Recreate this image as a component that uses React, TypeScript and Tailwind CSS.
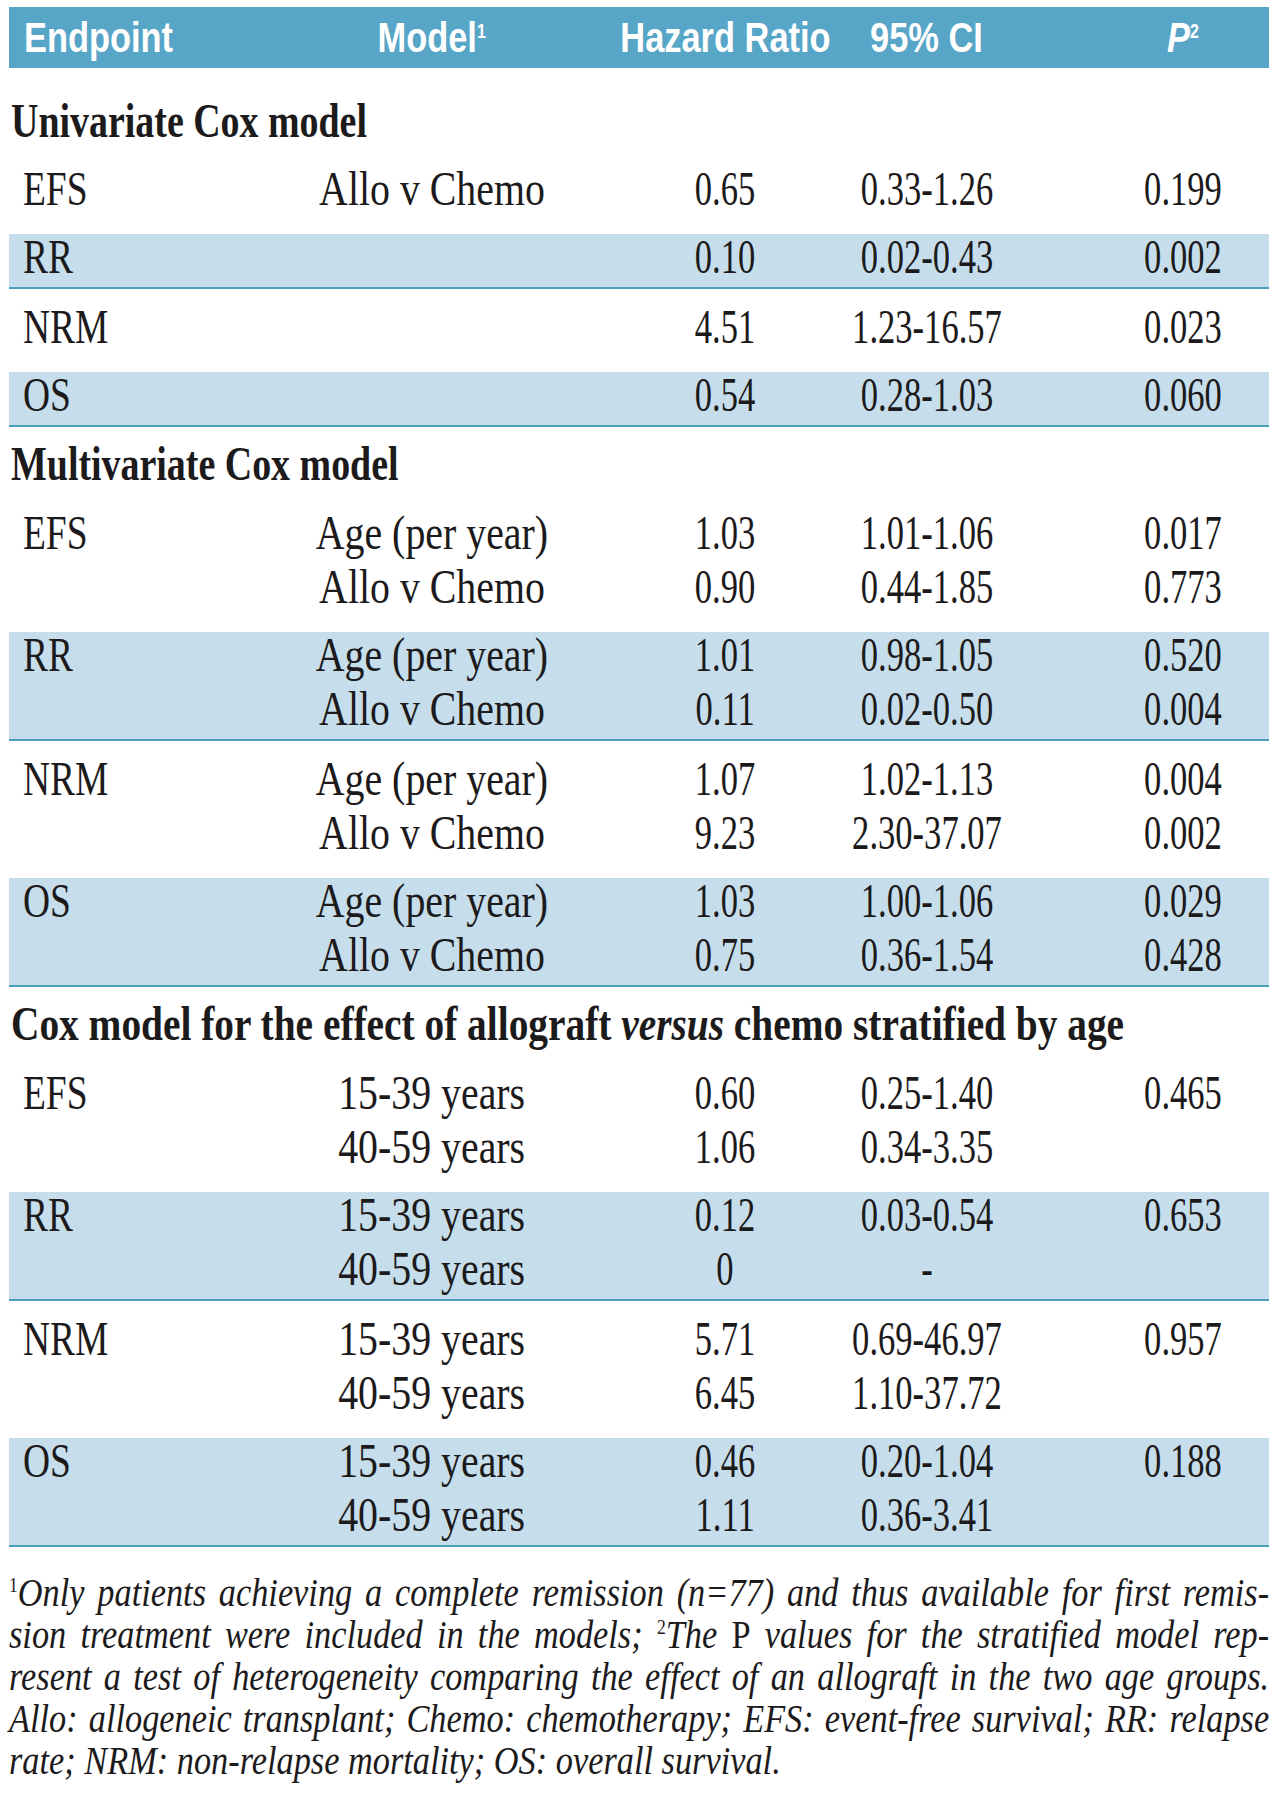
import React from 'react';

type Line = [string, string, string, string];
type Row = { ep: string; lines: Line[] };

const cols = 'grid grid-cols-[162px_522px_64px_340px_172px] items-center';

const univariate: Row[] = [
    { ep: 'EFS', lines: [['Allo v Chemo', '0.65', '0.33-1.26', '0.199']] },
    { ep: 'RR', lines: [['', '0.10', '0.02-0.43', '0.002']] },
    { ep: 'NRM', lines: [['', '4.51', '1.23-16.57', '0.023']] },
    { ep: 'OS', lines: [['', '0.54', '0.28-1.03', '0.060']] },
];

const multivariate: Row[] = [
    { ep: 'EFS', lines: [['Age (per year)', '1.03', '1.01-1.06', '0.017'], ['Allo v Chemo', '0.90', '0.44-1.85', '0.773']] },
    { ep: 'RR', lines: [['Age (per year)', '1.01', '0.98-1.05', '0.520'], ['Allo v Chemo', '0.11', '0.02-0.50', '0.004']] },
    { ep: 'NRM', lines: [['Age (per year)', '1.07', '1.02-1.13', '0.004'], ['Allo v Chemo', '9.23', '2.30-37.07', '0.002']] },
    { ep: 'OS', lines: [['Age (per year)', '1.03', '1.00-1.06', '0.029'], ['Allo v Chemo', '0.75', '0.36-1.54', '0.428']] },
];

const stratified: Row[] = [
    { ep: 'EFS', lines: [['15-39 years', '0.60', '0.25-1.40', '0.465'], ['40-59 years', '1.06', '0.34-3.35', '']] },
    { ep: 'RR', lines: [['15-39 years', '0.12', '0.03-0.54', '0.653'], ['40-59 years', '0', '-', '']] },
    { ep: 'NRM', lines: [['15-39 years', '5.71', '0.69-46.97', '0.957'], ['40-59 years', '6.45', '1.10-37.72', '']] },
    { ep: 'OS', lines: [['15-39 years', '0.46', '0.20-1.04', '0.188'], ['40-59 years', '1.11', '0.36-3.41', '']] },
];

// condensed look: the print font is much narrower than Times
const Num = ({ children }: { children: React.ReactNode }) => (
    <div className="flex justify-center whitespace-nowrap">
        <span className="inline-block scale-x-[0.72]">{children}</span>
    </div>
);

const SectionTitle = ({ children, first, wide }: { children: React.ReactNode; first?: boolean; wide?: boolean }) => (
    <div className={`${first ? 'pt-[30px] pb-[7px]' : 'pt-[14px] pb-[8px]'} pl-[2px] leading-[46px] font-bold whitespace-nowrap`}>
        <span className={`inline-block origin-left ${wide ? 'scale-x-[0.82]' : 'scale-x-[0.79]'}`}>{children}</span>
    </div>
);

const TableRow = ({ row, shaded }: { row: Row; shaded: boolean }) => (
    <div
        className={`flex flex-col gap-2 ${shaded ? 'bg-[#c6deec] border-b-2 border-[#4c9ec0] pb-[7px]' : 'pt-[15px] pb-[22px]'}`}
    >
        {row.lines.map((l, i) => (
            <div key={i} className={`${cols} h-[46px] leading-[46px]`}>
                <div className="pl-[14px] whitespace-nowrap">
                    {i === 0 && <span className="inline-block origin-left scale-x-[0.78]">{row.ep}</span>}
                </div>
                <div className="flex justify-center whitespace-nowrap">
                    <span className="inline-block scale-x-[0.83]">{l[0]}</span>
                </div>
                <Num>{l[1]}</Num>
                <Num>{l[2]}</Num>
                <Num>{l[3]}</Num>
            </div>
        ))}
    </div>
);

const Section = ({ rows }: { rows: Row[] }) => (
    <div>
        {rows.map((r, i) => (
            <TableRow key={r.ep} row={r} shaded={i % 2 === 1} />
        ))}
    </div>
);

const HeadCell = ({ children, left }: { children: React.ReactNode; left?: boolean }) => (
    <div className={`flex whitespace-nowrap ${left ? 'pl-[15px] justify-start' : 'justify-center'}`}>
        <span className={`inline-block scale-x-[0.8] ${left ? 'origin-left' : ''}`}>{children}</span>
    </div>
);

const FootLine = ({ children, last }: { children: React.ReactNode; last?: boolean }) => (
    <div className={last ? '' : 'text-justify [text-align-last:justify]'}>{children}</div>
);

export default function App() {
    return (
        <div className="min-h-screen bg-white overflow-x-hidden text-[#1c1a1b]">
            <div className="ml-[9px] pt-[7px] w-[1260px] font-['Liberation_Serif','Times_New_Roman',serif] text-[48px]">
                {/* Header band */}
                <div className={`${cols} h-[61px] bg-[#57a5c7] text-white font-bold text-[43px] font-['Liberation_Sans',Arial,sans-serif] leading-none`}>
                    <HeadCell left>Endpoint</HeadCell>
                    <HeadCell>
                        Model<sup className="text-[20px] -top-[14px]">1</sup>
                    </HeadCell>
                    <HeadCell>Hazard Ratio</HeadCell>
                    <HeadCell>95% CI</HeadCell>
                    <HeadCell>
                        <span className="italic">P</span>
                        <sup className="text-[20px] -top-[14px]">2</sup>
                    </HeadCell>
                </div>

                <SectionTitle first>Univariate Cox model</SectionTitle>
                <Section rows={univariate} />

                <SectionTitle>Multivariate Cox model</SectionTitle>
                <Section rows={multivariate} />

                <SectionTitle wide>
                    Cox model for the effect of allograft <span className="italic">versus</span> chemo stratified by age
                </SectionTitle>
                <Section rows={stratified} />

                {/* Footnote */}
                <div className="mt-[25px] w-[1432px] origin-left scale-x-[0.88] text-[39px] leading-[42px] italic">
                    <FootLine>
                        <sup className="not-italic text-[20px] -top-[14px]">1</sup>Only patients achieving a complete remission (n=77) and thus available for first remis-
                    </FootLine>
                    <FootLine>
                        sion treatment were included in the models; <sup className="not-italic text-[20px] -top-[14px]">2</sup>The <span className="not-italic">P</span> values for the stratified model rep-
                    </FootLine>
                    <FootLine>resent a test of heterogeneity comparing the effect of an allograft in the two age groups.</FootLine>
                    <FootLine>Allo: allogeneic transplant; Chemo: chemotherapy; EFS: event-free survival; RR: relapse</FootLine>
                    <FootLine last>rate; NRM: non-relapse mortality; OS: overall survival.</FootLine>
                </div>
            </div>
        </div>
    );
}
